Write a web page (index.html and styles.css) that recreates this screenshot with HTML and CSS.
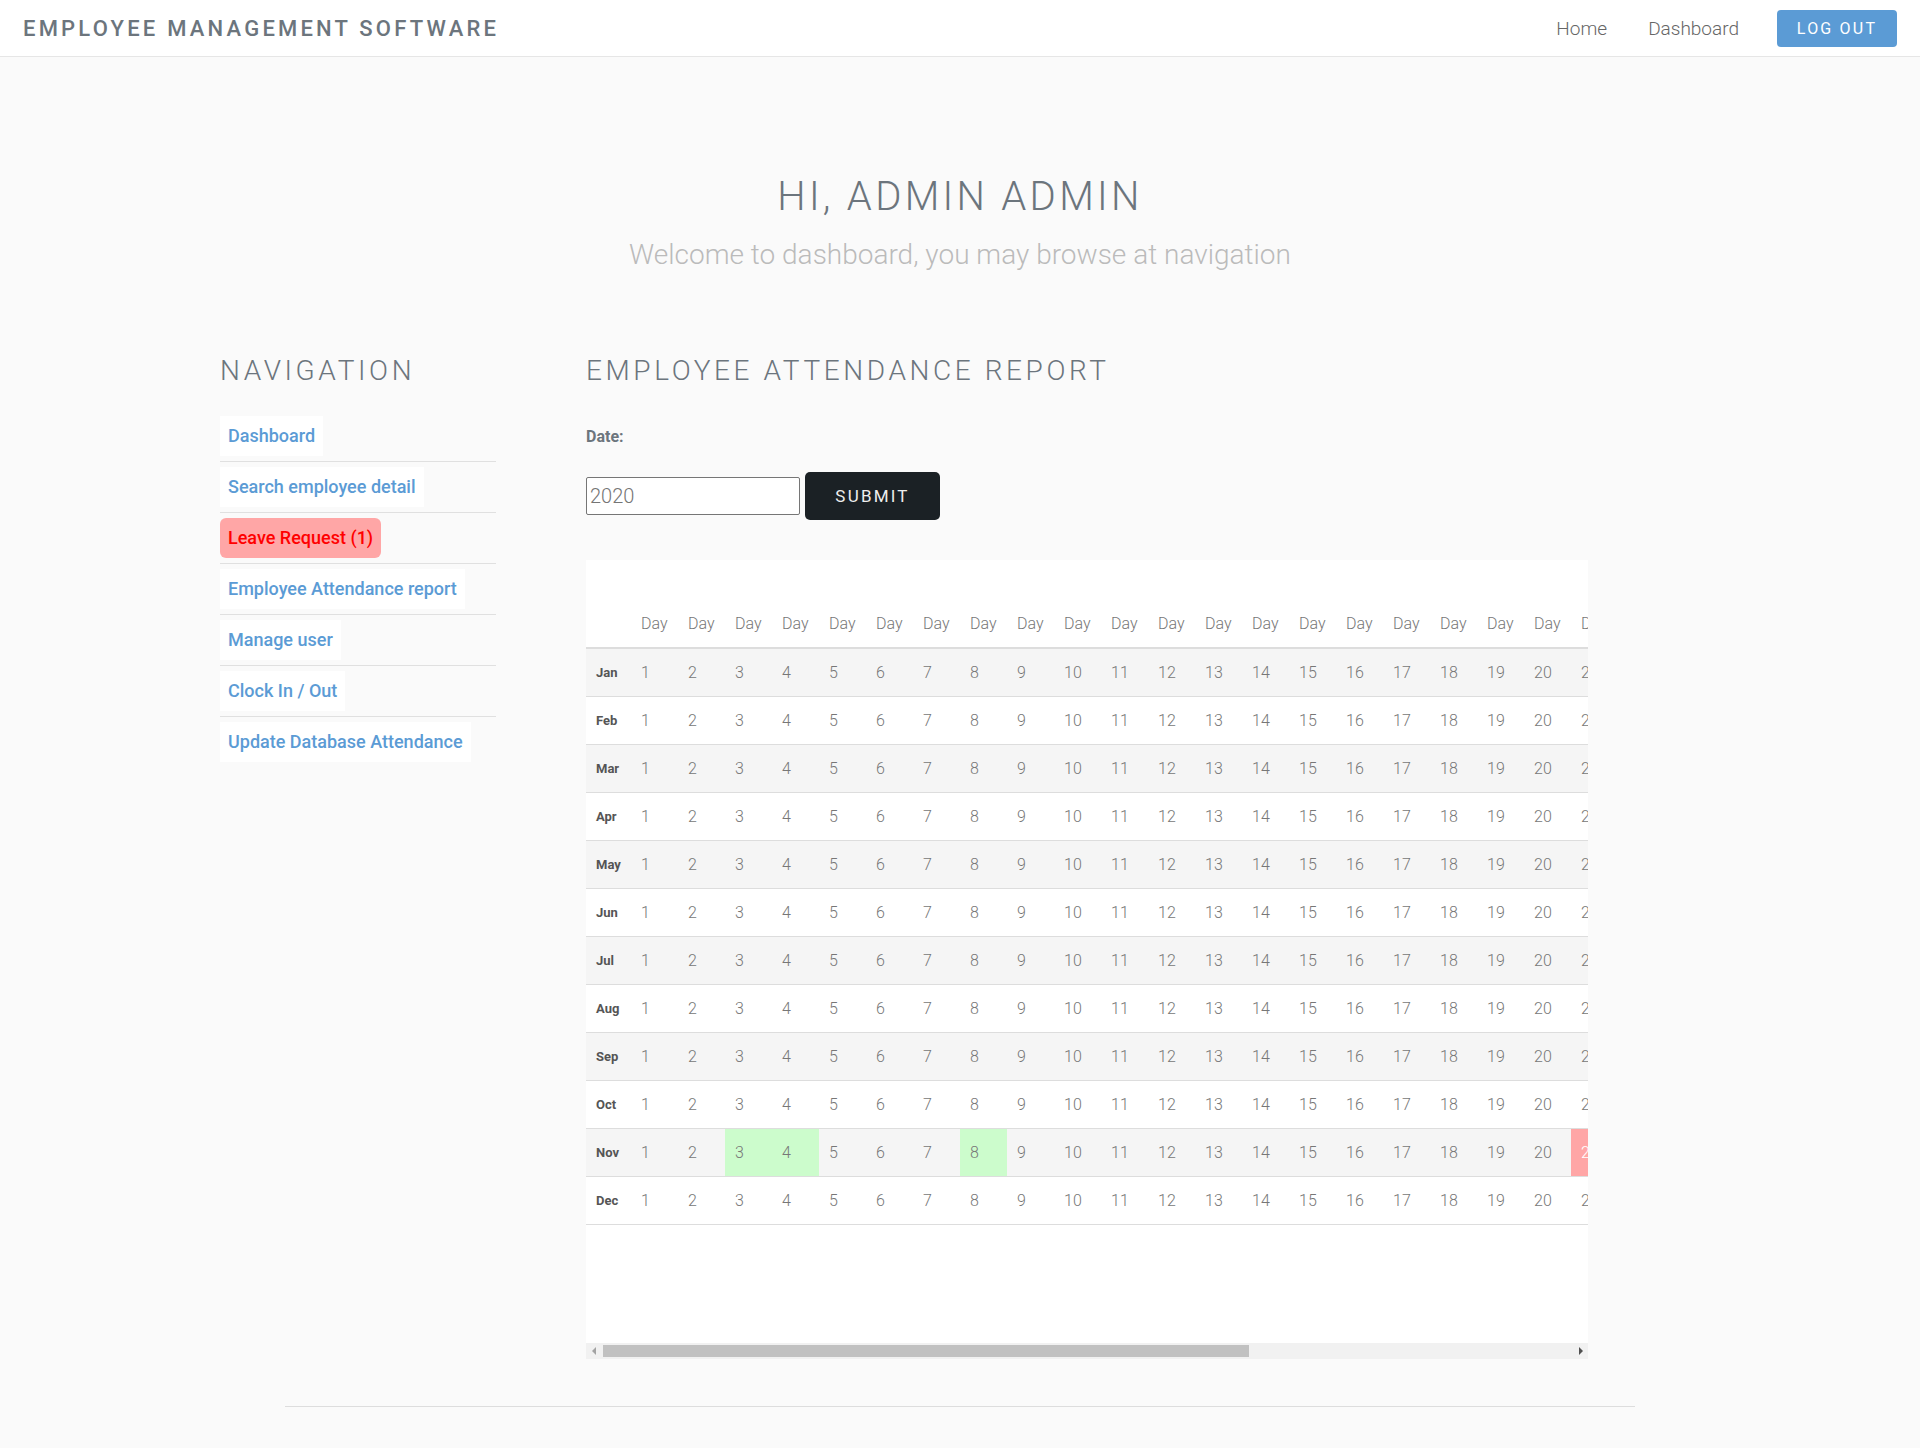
FILE: index.html
```html
<!DOCTYPE html>
<html lang="en">
<head>
<meta charset="utf-8">
<title>Employee Management Software</title>
<link rel="stylesheet" href="styles.css">
</head>
<body>
<header class="navbar">
  <a class="brand" href="#">EMPLOYEE MANAGEMENT SOFTWARE</a>
  <nav class="topnav">
    <a href="#" class="toplink">Home</a>
    <a href="#" class="toplink">Dashboard</a>
    <a href="#" class="btn-logout">LOG OUT</a>
  </nav>
</header>

<section class="hero">
  <h1 class="hero-title">HI, ADMIN ADMIN</h1>
  <p class="hero-sub">Welcome to dashboard, you may browse at navigation</p>
</section>

<div class="content">
  <aside class="sidebar">
    <h3 class="section-title">NAVIGATION</h3>
    <ul class="side-nav">
      <li><a href="#" class="side-link">Dashboard</a></li>
      <li><a href="#" class="side-link">Search employee detail</a></li>
      <li><a href="#" class="side-link side-link-alert">Leave Request (1)</a></li>
      <li><a href="#" class="side-link">Employee Attendance report</a></li>
      <li><a href="#" class="side-link">Manage user</a></li>
      <li><a href="#" class="side-link">Clock In / Out</a></li>
      <li><a href="#" class="side-link">Update Database Attendance</a></li>
    </ul>
  </aside>

  <main class="report">
    <h3 class="section-title">EMPLOYEE ATTENDANCE REPORT</h3>
    <form class="date-form">
      <label class="date-label" for="year">Date:</label>
      <div class="form-row">
        <input id="year" class="year-input" type="text" value="2020">
        <button type="button" class="btn-submit">SUBMIT</button>
      </div>
    </form>

    <div class="table-wrap">
      <div class="table-viewport">
      <table class="attendance">
        <thead>
          <tr>
            <th class="month-col"></th>
            <th>Day</th><th>Day</th><th>Day</th><th>Day</th><th>Day</th><th>Day</th><th>Day</th><th>Day</th><th>Day</th><th>Day</th>
            <th>Day</th><th>Day</th><th>Day</th><th>Day</th><th>Day</th><th>Day</th><th>Day</th><th>Day</th><th>Day</th><th>Day</th>
            <th>Day</th><th>Day</th><th>Day</th><th>Day</th><th>Day</th><th>Day</th><th>Day</th><th>Day</th><th>Day</th><th>Day</th>
            <th>Day</th>
          </tr>
        </thead>
        <tbody>
          <tr><th class="month">Jan</th><td>1</td><td>2</td><td>3</td><td>4</td><td>5</td><td>6</td><td>7</td><td>8</td><td>9</td><td>10</td><td>11</td><td>12</td><td>13</td><td>14</td><td>15</td><td>16</td><td>17</td><td>18</td><td>19</td><td>20</td><td>21</td><td>22</td><td>23</td><td>24</td><td>25</td><td>26</td><td>27</td><td>28</td><td>29</td><td>30</td><td>31</td></tr>
          <tr><th class="month">Feb</th><td>1</td><td>2</td><td>3</td><td>4</td><td>5</td><td>6</td><td>7</td><td>8</td><td>9</td><td>10</td><td>11</td><td>12</td><td>13</td><td>14</td><td>15</td><td>16</td><td>17</td><td>18</td><td>19</td><td>20</td><td>21</td><td>22</td><td>23</td><td>24</td><td>25</td><td>26</td><td>27</td><td>28</td><td>29</td><td>30</td><td>31</td></tr>
          <tr><th class="month">Mar</th><td>1</td><td>2</td><td>3</td><td>4</td><td>5</td><td>6</td><td>7</td><td>8</td><td>9</td><td>10</td><td>11</td><td>12</td><td>13</td><td>14</td><td>15</td><td>16</td><td>17</td><td>18</td><td>19</td><td>20</td><td>21</td><td>22</td><td>23</td><td>24</td><td>25</td><td>26</td><td>27</td><td>28</td><td>29</td><td>30</td><td>31</td></tr>
          <tr><th class="month">Apr</th><td>1</td><td>2</td><td>3</td><td>4</td><td>5</td><td>6</td><td>7</td><td>8</td><td>9</td><td>10</td><td>11</td><td>12</td><td>13</td><td>14</td><td>15</td><td>16</td><td>17</td><td>18</td><td>19</td><td>20</td><td>21</td><td>22</td><td>23</td><td>24</td><td>25</td><td>26</td><td>27</td><td>28</td><td>29</td><td>30</td><td>31</td></tr>
          <tr><th class="month">May</th><td>1</td><td>2</td><td>3</td><td>4</td><td>5</td><td>6</td><td>7</td><td>8</td><td>9</td><td>10</td><td>11</td><td>12</td><td>13</td><td>14</td><td>15</td><td>16</td><td>17</td><td>18</td><td>19</td><td>20</td><td>21</td><td>22</td><td>23</td><td>24</td><td>25</td><td>26</td><td>27</td><td>28</td><td>29</td><td>30</td><td>31</td></tr>
          <tr><th class="month">Jun</th><td>1</td><td>2</td><td>3</td><td>4</td><td>5</td><td>6</td><td>7</td><td>8</td><td>9</td><td>10</td><td>11</td><td>12</td><td>13</td><td>14</td><td>15</td><td>16</td><td>17</td><td>18</td><td>19</td><td>20</td><td>21</td><td>22</td><td>23</td><td>24</td><td>25</td><td>26</td><td>27</td><td>28</td><td>29</td><td>30</td><td>31</td></tr>
          <tr><th class="month">Jul</th><td>1</td><td>2</td><td>3</td><td>4</td><td>5</td><td>6</td><td>7</td><td>8</td><td>9</td><td>10</td><td>11</td><td>12</td><td>13</td><td>14</td><td>15</td><td>16</td><td>17</td><td>18</td><td>19</td><td>20</td><td>21</td><td>22</td><td>23</td><td>24</td><td>25</td><td>26</td><td>27</td><td>28</td><td>29</td><td>30</td><td>31</td></tr>
          <tr><th class="month">Aug</th><td>1</td><td>2</td><td>3</td><td>4</td><td>5</td><td>6</td><td>7</td><td>8</td><td>9</td><td>10</td><td>11</td><td>12</td><td>13</td><td>14</td><td>15</td><td>16</td><td>17</td><td>18</td><td>19</td><td>20</td><td>21</td><td>22</td><td>23</td><td>24</td><td>25</td><td>26</td><td>27</td><td>28</td><td>29</td><td>30</td><td>31</td></tr>
          <tr><th class="month">Sep</th><td>1</td><td>2</td><td>3</td><td>4</td><td>5</td><td>6</td><td>7</td><td>8</td><td>9</td><td>10</td><td>11</td><td>12</td><td>13</td><td>14</td><td>15</td><td>16</td><td>17</td><td>18</td><td>19</td><td>20</td><td>21</td><td>22</td><td>23</td><td>24</td><td>25</td><td>26</td><td>27</td><td>28</td><td>29</td><td>30</td><td>31</td></tr>
          <tr><th class="month">Oct</th><td>1</td><td>2</td><td>3</td><td>4</td><td>5</td><td>6</td><td>7</td><td>8</td><td>9</td><td>10</td><td>11</td><td>12</td><td>13</td><td>14</td><td>15</td><td>16</td><td>17</td><td>18</td><td>19</td><td>20</td><td>21</td><td>22</td><td>23</td><td>24</td><td>25</td><td>26</td><td>27</td><td>28</td><td>29</td><td>30</td><td>31</td></tr>
          <tr><th class="month">Nov</th><td>1</td><td>2</td><td class="present">3</td><td class="present">4</td><td>5</td><td>6</td><td>7</td><td class="present">8</td><td>9</td><td>10</td><td>11</td><td>12</td><td>13</td><td>14</td><td>15</td><td>16</td><td>17</td><td>18</td><td>19</td><td>20</td><td class="absent">21</td><td>22</td><td>23</td><td>24</td><td>25</td><td>26</td><td>27</td><td>28</td><td>29</td><td>30</td><td>31</td></tr>
          <tr><th class="month">Dec</th><td>1</td><td>2</td><td>3</td><td>4</td><td>5</td><td>6</td><td>7</td><td>8</td><td>9</td><td>10</td><td>11</td><td>12</td><td>13</td><td>14</td><td>15</td><td>16</td><td>17</td><td>18</td><td>19</td><td>20</td><td>21</td><td>22</td><td>23</td><td>24</td><td>25</td><td>26</td><td>27</td><td>28</td><td>29</td><td>30</td><td>31</td></tr>
        </tbody>
      </table>
      </div>
      <div class="hscroll">
        <span class="hscroll-btn"><span class="arrow arrow-left"></span></span>
        <span class="hscroll-thumb"></span>
        <span class="hscroll-spacer"></span>
        <span class="hscroll-btn"><span class="arrow arrow-right"></span></span>
      </div>
    </div>
  </main>
</div>

<footer class="footer"></footer>
</body>
</html>
```

FILE: styles.css
```css
* { box-sizing: border-box; }

html, body { margin: 0; padding: 0; }

body {
  background: #fafafa;
  font-family: Roboto, "Liberation Sans", Arial, sans-serif;
  color: #6c757d;
}

/* ---------- top bar ---------- */
.navbar {
  height: 57px;
  background: #fff;
  border-bottom: 1px solid #e6e6e6;
  display: flex;
  align-items: center;
  justify-content: space-between;
  padding: 0 23px;
}

.brand {
  font-size: 22px;
  font-weight: 500;
  letter-spacing: 3.2px;
  color: #6c757d;
  text-decoration: none;
}

.topnav {
  display: flex;
  align-items: center;
}

.toplink {
  font-size: 19px;
  font-weight: 300;
  color: #666;
  text-decoration: none;
  margin-right: 41px;
}

.toplink + .toplink { margin-right: 38px; }

.btn-logout {
  display: flex;
  align-items: center;
  justify-content: center;
  width: 120px;
  height: 37px;
  background: #5b9bd5;
  color: #fff;
  border-radius: 4px;
  font-size: 16px;
  font-weight: 400;
  letter-spacing: 2.2px;
  text-decoration: none;
}

/* ---------- hero ---------- */
.hero {
  padding-top: 116px;
  text-align: center;
}

.hero-title {
  margin: 0;
  font-size: 40px;
  line-height: 48px;
  font-weight: 300;
  letter-spacing: 3.3px;
  color: #6c757d;
}

.hero-sub {
  margin: 17px 0 0;
  font-size: 28px;
  line-height: 34px;
  font-weight: 300;
  color: #bbb;
}

/* ---------- content ---------- */
.content {
  display: flex;
  align-items: flex-start;
  margin-top: 82px;
  padding-left: 220px;
}

.sidebar {
  width: 276px;
  margin-right: 90px;
}

.section-title {
  margin: 0;
  font-size: 28px;
  line-height: 34px;
  font-weight: 300;
  letter-spacing: 3.6px;
  color: #6c757d;
}

.side-nav {
  list-style: none;
  margin: 23px 0 0;
  padding: 0;
}

.side-nav li {
  padding: 5px 0;
  border-bottom: 1px solid #e0e0e0;
}

.side-nav li:last-child { border-bottom: none; }

.side-link {
  display: inline-block;
  padding: 8px;
  line-height: 24px;
  font-size: 18px;
  font-weight: 500;
  color: #5b9bd5;
  background: #fff;
  text-decoration: none;
}

.side-link-alert {
  background: #ffa6a6;
  color: #ff0000;
  border-radius: 6px;
}

.report {
  width: 1002px;
}

.date-form { margin: 0; }

.date-label {
  display: block;
  margin-top: 37px;
  font-size: 16px;
  line-height: 24px;
  font-weight: 700;
  color: #6c757d;
}

.form-row {
  display: flex;
  align-items: center;
  gap: 5px;
  margin-top: 23px;
}

.year-input {
  width: 214px;
  height: 38px;
  border: 1px solid #767676;
  border-radius: 2px;
  padding: 0 3px;
  font-family: Roboto, "Liberation Sans", Arial, sans-serif;
  font-size: 20px;
  font-weight: 300;
  color: #757575;
  background: #fff;
}

.btn-submit {
  width: 135px;
  height: 48px;
  border: none;
  border-radius: 5px;
  background: #1b2125;
  color: #eee;
  font-family: Roboto, "Liberation Sans", Arial, sans-serif;
  font-size: 17px;
  font-weight: 400;
  letter-spacing: 2.2px;
}

/* ---------- table ---------- */
.table-wrap {
  margin-top: 40px;
  background: #fff;
}

.table-viewport {
  overflow: hidden;
  padding-top: 41px;
  padding-bottom: 118px;
}

.attendance {
  width: max-content;
  border-collapse: collapse;
  white-space: nowrap;
}

.attendance th,
.attendance td {
  padding: 12px 10px;
  text-align: left;
  font-size: 16px;
  font-weight: 300;
  color: #777;
}

.attendance thead th {
  width: 47px;
  line-height: 22px;
  border-bottom: 2px solid #ddd;
}

.attendance thead th.month-col { width: 45px; }

.attendance tbody td,
.attendance tbody th {
  line-height: 23px;
  border-bottom: 1px solid #ddd;
}

.attendance tbody th.month {
  font-size: 13px;
  font-weight: 700;
  color: #555;
}

.attendance tbody tr:nth-child(odd) { background: #f5f5f5; }

.attendance td.present { background: #ccfccc; }

.attendance td.absent {
  background: #ffa6a6;
  color: #fff;
}

/* horizontal scrollbar drawn under the table */
.hscroll {
  display: flex;
  align-items: stretch;
  height: 16px;
  background: #f1f1f1;
}

.hscroll-btn {
  width: 15px;
  display: flex;
  align-items: center;
  justify-content: center;
}

.hscroll-thumb {
  width: 646px;
  margin: 2px 0 2px 2px;
  background: #c1c1c1;
}

.hscroll-spacer { flex: 1; }

.arrow {
  width: 0;
  height: 0;
  border-top: 4px solid transparent;
  border-bottom: 4px solid transparent;
}

.arrow-left { border-right: 4px solid #a3a3a3; }
.arrow-right { border-left: 4px solid #505050; }

/* ---------- footer ---------- */
.footer {
  margin: 47px 285px 0;
  height: 40px;
  border-top: 1px solid #ddd;
}
```
